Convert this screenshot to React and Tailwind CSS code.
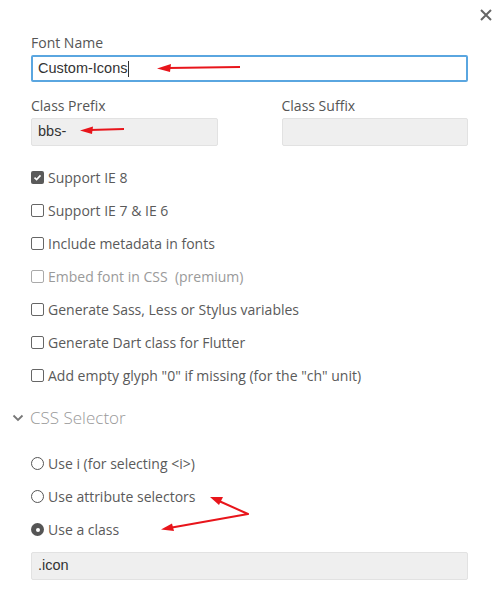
import React from "react";

function Checkbox({ checked, disabled, label }) {
  return (
    <div className="flex h-[33px] items-center">
      {checked ? (
        <span className="flex h-[13px] w-[13px] items-center justify-center rounded-[2px] bg-[#5a5a5a]">
          <svg width="9" height="9" viewBox="0 0 9 9">
            <path d="M1.5 4.6 L3.6 6.6 L7.5 2.4" fill="none" stroke="#fff" strokeWidth="1.6" />
          </svg>
        </span>
      ) : (
        <span
          className={
            disabled
              ? "h-[13px] w-[13px] rounded-[2px] border-[1.5px] border-[#aaa]"
              : "h-[13px] w-[13px] rounded-[2px] border-[1.5px] border-[#666]"
          }
        />
      )}
      <span
        className={
          disabled
            ? "ml-[4px] whitespace-pre text-[14px] text-[#9a9a9a]"
            : "ml-[4px] whitespace-pre text-[14px] text-[#5a5a5a]"
        }
      >
        {label}
      </span>
    </div>
  );
}

function Radio({ checked, label }) {
  return (
    <div className="flex h-[33px] items-center">
      {checked ? (
        <span className="flex h-[13px] w-[13px] items-center justify-center rounded-full bg-[#555]">
          <span className="h-[4px] w-[4px] rounded-full bg-white" />
        </span>
      ) : (
        <span className="h-[13px] w-[13px] rounded-full border-[1.5px] border-[#555]" />
      )}
      <span className="ml-[4px] text-[14px] text-[#5a5a5a]">{label}</span>
    </div>
  );
}

export default function App() {
  return (
    <div className="relative h-[600px] w-[503px] overflow-hidden bg-white font-['Open_Sans',sans-serif]">
      <button className="absolute right-[11px] top-[9px] flex h-[12px] w-[12px] items-center justify-center">
        <svg width="12" height="12" viewBox="0 0 12 12">
          <path d="M1 1 L11 11 M11 1 L1 11" stroke="#666" strokeWidth="2" />
        </svg>
      </button>

      <div className="w-[468px] pl-[31px] pt-[34px]">
        <div className="text-[14px] leading-[18px] text-[#555]">Font Name</div>
        <div className="mt-[3px] flex h-[27px] items-center rounded-[2px] border-2 border-[#5aa6e0] pl-[5px] font-['Liberation_Sans',sans-serif] text-[14.5px] text-[#333]">
          Custom-Icons
          <span className="ml-[1px] inline-block h-[16px] w-[1px] bg-[#333]" />
        </div>

        <div className="mt-[15px] grid grid-cols-2 gap-x-[64px]">
          <div>
            <div className="text-[14px] leading-[18px] text-[#555]">Class Prefix</div>
            <div className="mt-[3px] flex h-[28px] items-center rounded-[2px] border border-[#e2e2e2] bg-[#efefef] pl-[6px] font-['Liberation_Sans',sans-serif] text-[14.5px] text-[#333]">
              bbs-
            </div>
          </div>
          <div>
            <div className="text-[14px] leading-[18px] text-[#555]">Class Suffix</div>
            <div className="mt-[3px] h-[28px] rounded-[2px] border border-[#e2e2e2] bg-[#efefef]" />
          </div>
        </div>

        <div className="mt-[15px] flex flex-col">
          <Checkbox checked label="Support IE 8" />
          <Checkbox label="Support IE 7 & IE 6" />
          <Checkbox label="Include metadata in fonts" />
          <Checkbox disabled label="Embed font in CSS  (premium)" />
          <Checkbox label="Generate Sass, Less or Stylus variables" />
          <Checkbox label="Generate Dart class for Flutter" />
          <Checkbox label={'Add empty glyph "0" if missing (for the "ch" unit)'} />
        </div>
      </div>

      <div className="mt-[13px] flex h-[26px] items-center pl-[12px]">
        <svg width="12" height="8" viewBox="0 0 12 8">
          <path d="M1.5 1.5 L6 6 L10.5 1.5" fill="none" stroke="#777" strokeWidth="1.8" />
        </svg>
        <span className="ml-[6px] text-[17px] font-light text-[#999]">CSS Selector</span>
      </div>

      <div className="mt-[16px] w-[468px] pl-[31px]">
        <Radio label="Use i (for selecting <i>)" />
        <Radio label="Use attribute selectors" />
        <Radio checked label="Use a class" />
        <div className="mt-[6px] flex h-[28px] items-center rounded-[2px] border border-[#e2e2e2] bg-[#efefef] pl-[6px] font-['Liberation_Sans',sans-serif] text-[14.5px] text-[#333]">
          .icon
        </div>
      </div>

      <svg className="pointer-events-none absolute inset-0" width="503" height="600" viewBox="0 0 503 600">
        <g fill="#e8151b" stroke="#e8151b">
          <path d="M168 68 L240 67" strokeWidth="2" fill="none" />
          <path d="M157 68.5 L171 64 L170 72 Z" stroke="none" />
          <path d="M90 130 L124 129" strokeWidth="2" fill="none" />
          <path d="M80 130.5 L93 126.5 L92 134 Z" stroke="none" />
          <path d="M219 501 L248 514 L172 527.5" strokeWidth="2" fill="none" strokeLinejoin="round" />
          <path d="M210 497 L223 497 L219 505 Z" stroke="none" />
          <path d="M161 529.5 L172 523.5 L174 531 Z" stroke="none" />
        </g>
      </svg>
    </div>
  );
}
